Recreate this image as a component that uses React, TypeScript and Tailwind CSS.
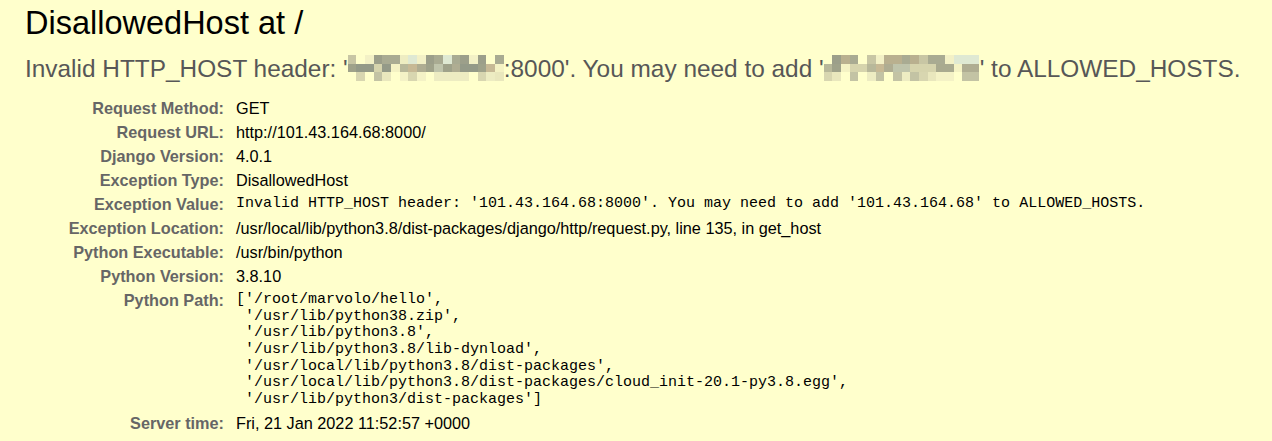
import React from 'react'

// pixelated redaction over the host name
const TOP = ['bg-[#ffffcc]', 'bg-[#a9ab92]', 'bg-[#eeedc2]', 'bg-[#dfe9d3]', 'bg-[#c8c6a4]', 'bg-[#9c9f8a]', 'bg-[#f3f1c6]', 'bg-[#b9b08f]']
const MID = ['bg-[#a9aa8f]', 'bg-[#b8b89a]', 'bg-[#9fa28a]', 'bg-[#c7b995]', 'bg-[#d6d4ad]', 'bg-[#949a88]', 'bg-[#bfc4ab]', 'bg-[#f4f2c4]', 'bg-[#afad92]']
const LOW = ['bg-[#ffffcc]', 'bg-[#f4f2c6]', 'bg-[#e9e7bd]', 'bg-[#d8d6b0]', 'bg-[#c3c3a4]', 'bg-[#ffffcc]', 'bg-[#edecc2]']

const Mosaic: React.FC<{ seed: number }> = ({ seed }) => {
  let s = seed * 7919 + 13
  const next = () => {
    s = (s * 1103515245 + 12345) % 2147483648
    return s / 2147483648
  }
  const cells = Array.from({ length: 54 }, (_, i) => {
    const row = Math.floor(i / 18)
    const pal = row === 0 ? TOP : row === 1 ? MID : LOW
    return pal[Math.floor(next() * pal.length)]
  })
  return (
    <span className="inline-block w-[156px] h-[26px] overflow-hidden align-[-4px]">
      <span className="grid grid-cols-[repeat(18,8.67px)] grid-rows-[repeat(3,8.67px)]">
        {cells.map((c, i) => (
          <span key={i} className={`block ${c}`} />
        ))}
      </span>
    </span>
  )
}

const mono = "font-['Liberation_Mono','Courier_New',monospace] text-[15px] leading-[16.67px] whitespace-pre"

const PYTHON_PATH = `['/root/marvolo/hello',
 '/usr/lib/python38.zip',
 '/usr/lib/python3.8',
 '/usr/lib/python3.8/lib-dynload',
 '/usr/local/lib/python3.8/dist-packages',
 '/usr/local/lib/python3.8/dist-packages/cloud_init-20.1-py3.8.egg',
 '/usr/lib/python3/dist-packages']`

type Row = { label: string; value: React.ReactNode; code?: boolean }

const ROWS: Row[] = [
  { label: 'Request Method:', value: 'GET' },
  { label: 'Request URL:', value: 'http://101.43.164.68:8000/' },
  { label: 'Django Version:', value: '4.0.1' },
  { label: 'Exception Type:', value: 'DisallowedHost' },
  {
    label: 'Exception Value:',
    value: "Invalid HTTP_HOST header: '101.43.164.68:8000'. You may need to add '101.43.164.68' to ALLOWED_HOSTS.",
    code: true
  },
  { label: 'Exception Location:', value: '/usr/local/lib/python3.8/dist-packages/django/http/request.py, line 135, in get_host' },
  { label: 'Python Executable:', value: '/usr/bin/python' },
  { label: 'Python Version:', value: '3.8.10' },
  { label: 'Python Path:', value: PYTHON_PATH, code: true },
  { label: 'Server time:', value: 'Fri, 21 Jan 2022 11:52:57 +0000' }
]

export default function App() {
  return (
    <div className="w-[1272px] h-[441px] overflow-hidden bg-[#ffffcc] font-['Liberation_Sans',Arial,sans-serif] text-black">
      <div className="px-[25px] pt-[5px]">
        <h1 className="text-[32.5px] leading-[37px] font-normal">DisallowedHost at /</h1>

        <p className="mt-[13px] text-[24.4px] leading-[28px] text-[#575757] whitespace-nowrap">
          Invalid HTTP_HOST header: '<Mosaic seed={3} />:8000'. You may need to add '<Mosaic seed={8} />' to ALLOWED_HOSTS.
        </p>

        <div className="mt-[13px] grid grid-cols-[207px_1fr] text-[16.25px]">
          {ROWS.map(row => (
            <React.Fragment key={row.label}>
              <div className="text-right font-bold text-[#666666] pr-[8px] py-[2.5px] leading-[19px]">
                {row.label}
              </div>
              <div className={`pl-[4px] py-[2.5px] ${row.code ? `${mono} pt-[4px]` : 'leading-[19px]'}`}>
                {row.value}
              </div>
            </React.Fragment>
          ))}
        </div>
      </div>
    </div>
  )
}
